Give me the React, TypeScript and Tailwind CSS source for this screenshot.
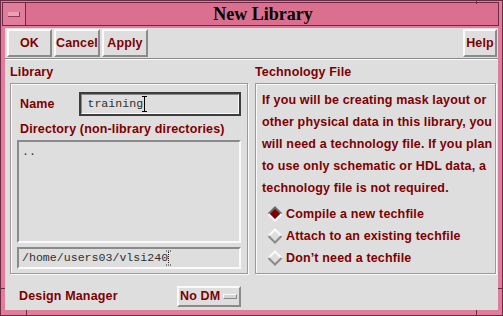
import React from "react";

const raised = "border-2 border-t-[#fafafa] border-l-[#fafafa] border-b-[#8a8a8a] border-r-[#8a8a8a]";
const sunken = "border-2 border-t-[#8a8a8a] border-l-[#8a8a8a] border-b-[#fafafa] border-r-[#fafafa]";
const etched = "border border-[#9a9a9a] shadow-[inset_1px_1px_0_#fafafa,1px_1px_0_#fafafa]";

function Diamond({ on }: { on?: boolean }) {
  const top = on ? "#6a6a6a" : "#fafafa";
  const bottom = on ? "#fafafa" : "#8a8a8a";
  return (
    <svg width="16" height="16" viewBox="0 0 16 16" className="shrink-0">
      <polygon points="8,2 14,8 8,14 2,8" fill={on ? "#800000" : "#dedede"} />
      <polyline points="1.5,8 8,1.5 14.5,8" fill="none" stroke={top} strokeWidth="2" />
      <polyline points="14.5,8 8,14.5 1.5,8" fill="none" stroke={bottom} strokeWidth="2" />
    </svg>
  );
}

function Button({ label, w }: { label: string; w: string }) {
  return (
    <button className={`${raised} ${w} h-[28px] flex items-center justify-center bg-[#dedede] text-[#800000] tracking-[0.15px]`}>
      {label}
    </button>
  );
}

const info = [
  "If you will be creating mask layout or",
  "other physical data in this library, you",
  "will need a technology file. If you plan",
  "to use only schematic or HDL data, a",
  "technology file is not required.",
];

const radios = [
  { label: "Compile a new techfile", on: true },
  { label: "Attach to an existing techfile" },
  { label: "Don\u2019t need a techfile" },
];

export default function App() {
  return (
    <div className="relative w-[503px] h-[316px] bg-[#e07d9c] border border-[#6d2a44] flex flex-col overflow-hidden font-['Liberation_Sans',Arial,sans-serif] text-[12.5px] tracking-[0.15px] font-bold text-[#800000]">
      {/* frame corner marks */}
      <div className="absolute left-[475px] top-0 w-px h-[3px] bg-[#6d2a44]" />
      <div className="absolute left-[475px] bottom-0 w-px h-[5px] bg-[#6d2a44]" />
      <div className="absolute left-[25px] bottom-0 w-px h-[5px] bg-[#6d2a44]" />
      <div className="absolute right-0 top-[287px] w-[4px] h-px bg-[#6d2a44]" />
      <div className="absolute left-0 top-[287px] w-[4px] h-px bg-[#6d2a44]" />

      {/* title bar */}
      <div className="flex h-[27px] pt-[1px] pl-[1px] pr-[3px]">
        <div className="w-[24px] h-[24px] border border-[#6d2a44] bg-[#e07d9c] flex items-center justify-center">
          <div className="w-[12px] h-[5px] bg-[#eba0b6] border-b border-r border-[#8a3a58]" />
        </div>
        <div className="flex-1 h-[24px] border-y border-r border-[#6d2a44] bg-[#da6f8f] flex items-center justify-center font-['Liberation_Serif',serif] text-[18px] tracking-normal text-black pl-[2px]">
          New Library
        </div>
      </div>

      {/* dialog body */}
      <div className="flex-1 mx-[4px] mb-[5px] bg-[#dedede] flex flex-col">
        <div className="h-[30px] flex items-start pt-[1px] pl-[2px] pr-[1px] gap-[2px]">
          <Button label="OK" w="w-[45px]" />
          <Button label="Cancel" w="w-[46px]" />
          <Button label="Apply" w="w-[46px]" />
          <div className="flex-1" />
          <Button label="Help" w="w-[34px]" />
        </div>
        <div className="h-[2px] border-t border-[#8a8a8a] border-b border-b-[#fafafa]" />

        <div className="flex-1 flex">
          {/* Library column */}
          <div className="w-[238px] ml-[5px] flex flex-col">
            <div className="h-[23px] pt-[4px] leading-[16px]">Library</div>
            <div className={`${etched} h-[191px] flex flex-col px-[6px] pt-[8px]`}>
              <div className="flex items-center">
                <span className="w-[63px] pl-[3px] leading-[16px]">Name</span>
                <div className="w-[163px] h-[24px] border-2 border-[#3c3c3c]">
                  <div className="h-full border-t border-l border-[#8a8a8a] border-b border-b-[#fafafa] border-r border-r-[#fafafa] flex items-center pl-[5px] font-['Liberation_Mono',monospace] font-normal text-[11.6px] tracking-normal text-[#303030]">
                    training
                    <svg width="5" height="16" viewBox="0 0 5 16" className="ml-[-1px]">
                      <path d="M0 0.5H5M0 15.5H5M2.5 0V16" stroke="#000" strokeWidth="1" fill="none" />
                    </svg>
                  </div>
                </div>
              </div>
              <div className="mt-[5px] pl-[3px] leading-[16px]">Directory (non-library directories)</div>
              <div className={`${sunken} mt-[3px] h-[103px] pl-[3px] pt-[3px] font-['Liberation_Mono',monospace] font-normal text-[11.6px] tracking-normal leading-[14px] text-[#303030]`}>
                ..
              </div>
              <div className={`${sunken} mt-[4px] h-[22px] flex items-center pl-[3px] font-['Liberation_Mono',monospace] font-normal text-[11.6px] tracking-normal text-[#303030]`}>
                /home/users03/vlsi240
                <svg width="5" height="16" viewBox="0 0 5 16" className="ml-[-2px]">
                  <path d="M0 1H1M2 1H3M4 1H5M0 15H1M2 15H3M4 15H5M2.5 2V3M2.5 4V5M2.5 6V7M2.5 8V9M2.5 10V11M2.5 12V13" stroke="#202020" strokeWidth="1" fill="none" />
                </svg>
              </div>
            </div>
            <div className="flex items-center mt-[12px] h-[21px]">
              <span className="w-[167px] pl-[9px]">Design Manager</span>
              <div className={`${raised} w-[64px] h-[21px] flex items-center pl-[1px]`}>
                <span>No DM</span>
                <div className="ml-[3px] w-[14px] h-[5px] border border-t-[#fafafa] border-l-[#fafafa] border-b-[#8a8a8a] border-r-[#8a8a8a] bg-[#d4d4d4]" />
              </div>
            </div>
          </div>

          {/* Technology File column */}
          <div className="w-[241px] ml-[7px] flex flex-col">
            <div className="h-[23px] pt-[4px] leading-[16px]">Technology File</div>
            <div className={`${etched} h-[191px] pl-[6px] pt-[5px]`}>
              <div className="leading-[22px] whitespace-nowrap">
                {info.map((l) => (
                  <div key={l}>{l}</div>
                ))}
              </div>
              <div className="mt-[4px] pl-[5px] leading-[22px]">
                {radios.map((r) => (
                  <div key={r.label} className="flex items-center gap-[3px] h-[22px] whitespace-nowrap">
                    <Diamond on={r.on} />
                    <span>{r.label}</span>
                  </div>
                ))}
              </div>
            </div>
          </div>
        </div>
      </div>
    </div>
  );
}
